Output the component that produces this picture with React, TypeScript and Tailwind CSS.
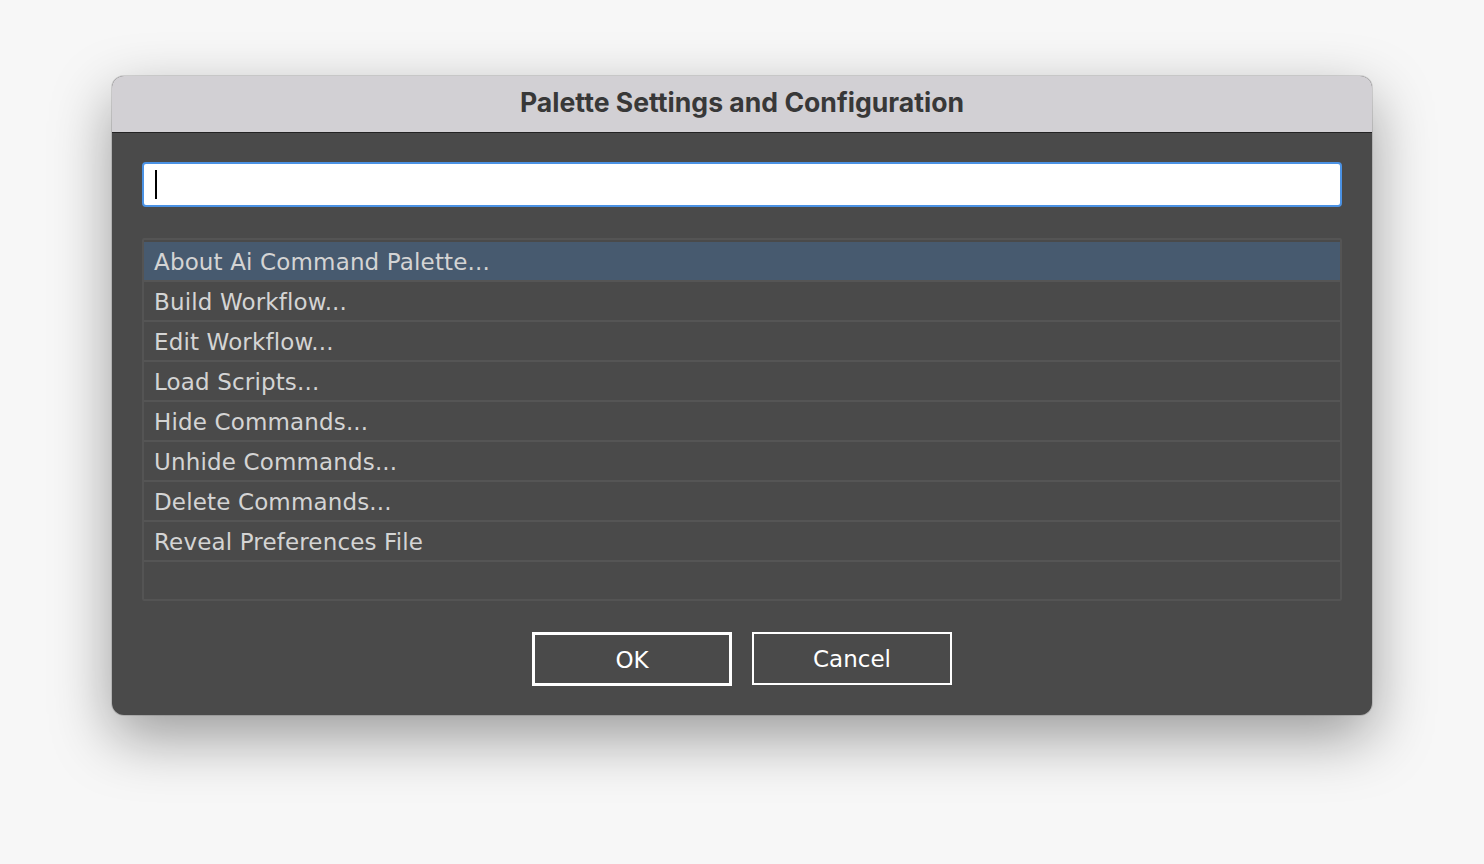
import React from "react";

const items = [
  "About Ai Command Palette...",
  "Build Workflow...",
  "Edit Workflow...",
  "Load Scripts...",
  "Hide Commands...",
  "Unhide Commands...",
  "Delete Commands...",
  "Reveal Preferences File",
];

const ui = { fontFamily: "'DejaVu Sans', 'Noto Sans', sans-serif" };

export default function App() {
  return (
    <div className="w-[1484px] h-[864px] bg-[#f7f7f7] pt-[76px] pl-[112px]" style={ui}>
      <div className="w-[1260px] h-[639px] rounded-[12px] overflow-hidden bg-[#4a4a4a] shadow-[0_22px_60px_rgba(0,0,0,0.38),0_0_0_1px_rgba(0,0,0,0.12)] flex flex-col">
        <div className="h-[57px] shrink-0 bg-[#d2d0d4] border-b border-[#232323] flex items-center justify-center">
          <span className="text-[26.6px] font-bold text-[#383838] -mt-[2px]" style={{ fontFamily: "Inter, 'Noto Sans', sans-serif" }}>
            Palette Settings and Configuration
          </span>
        </div>
        <div className="px-[30px] pt-[29px]">
          <div className="h-[45px] bg-white border-2 border-[#4b92e4] rounded-[4px] flex items-center pl-[11px]">
            <div className="w-[2px] h-[29px] bg-black" />
          </div>
          <div className="mt-[31px] h-[363px] border-2 border-[#545454] rounded-[2px] pt-[2px]">
            {items.map((t, i) => (
              <div
                key={t}
                className={`h-[40px] flex items-center pl-[10px] pt-[3px] border-b-2 border-[#555555] text-[23px] tracking-[0.15px] text-[#d4d4d4] ${i === 0 ? "bg-[#475a6f]" : ""}`}
              >
                <span>{t}</span>
              </div>
            ))}
          </div>
          <div className="mt-[31px] flex justify-center gap-[20px]">
            <button className="w-[200px] h-[54px] border-[3px] border-white text-white text-[23px] flex items-center justify-center pt-[2px]" style={ui}>
              OK
            </button>
            <button className="w-[200px] h-[53px] border-2 border-white text-white text-[23px] flex items-center justify-center pt-[2px]" style={ui}>
              Cancel
            </button>
          </div>
        </div>
      </div>
    </div>
  );
}
